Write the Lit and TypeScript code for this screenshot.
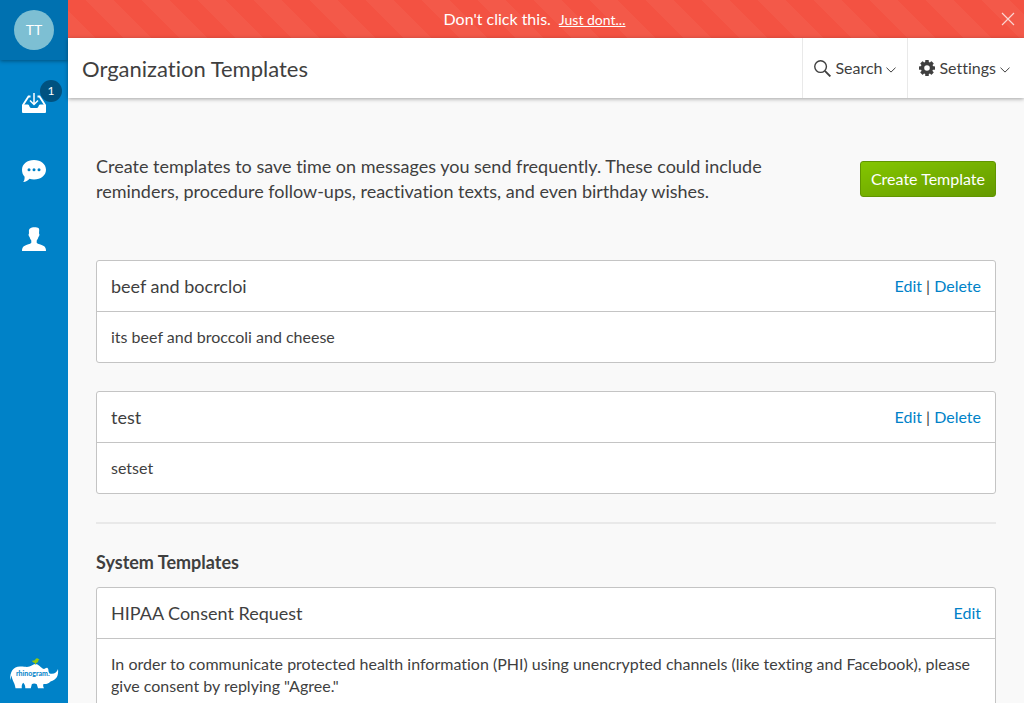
import { LitElement, html, css, svg, nothing } from "lit";
import { customElement, property } from "lit/decorators.js";

interface Template {
  title: string;
  body: string;
  removable: boolean;
}

const organizationTemplates: Template[] = [
  { title: "beef and bocrcloi", body: "its beef and broccoli and cheese", removable: true },
  { title: "test", body: "setset", removable: true },
];

const systemTemplates: Template[] = [
  {
    title: "HIPAA Consent Request",
    body: 'In order to communicate protected health information (PHI) using unencrypted channels (like texting and Facebook), please give consent by replying "Agree."',
    removable: false,
  },
];

const chevron = html`<svg class="chevron" width="10" height="6" viewBox="0 0 10 6" aria-hidden="true">
  <path d="M.5.7 5 5.1 9.5.7" fill="none" stroke="currentColor" stroke-width="1" />
</svg>`;

const gearTeeth = [0, 45, 90, 135, 180, 225, 270, 315].map(
  (a) => svg`<rect x="6.2" y="0" width="3.6" height="4" rx=".6" transform="rotate(${a} 8 8)" />`
);

@customElement("template-card")
export class TemplateCard extends LitElement {
  @property({ attribute: false }) template!: Template;

  static styles = css`
    :host { display: block; }
    .card { background: #fff; border: 1px solid #c4c4c4; border-radius: 3px; }
    .head {
      display: flex; align-items: center; justify-content: space-between; gap: 14px;
      padding: 14px; border-bottom: 1px solid #c4c4c4;
    }
    .title { margin: 0; font-size: 18px; line-height: 22px; font-weight: 400; }
    .actions { white-space: nowrap; }
    .link { color: #0082c8; text-decoration: none; }
    .body { margin: 0; padding: 14px; }
  `;

  render() {
    return html`<article class="card">
      <header class="head">
        <h3 class="title">${this.template.title}</h3>
        <span class="actions"><a class="link" href="#edit">Edit</a>${this.template.removable
          ? html` | <a class="link" href="#delete">Delete</a>`
          : nothing}</span>
      </header>
      <p class="body">${this.template.body}</p>
    </article>`;
  }
}

@customElement("app-root")
export class AppRoot extends LitElement {
  static styles = css`
    :host {
      display: flex; height: 100vh; overflow: hidden;
      font: 16px/22px Lato, sans-serif; font-variant-ligatures: none; color: #3f3f3f; background: #f9f9f9;
    }
    * { box-sizing: border-box; }
    button { font: inherit; font-variant-ligatures: none; color: inherit; border: 0; background: none; cursor: pointer; }
    svg { display: block; flex: none; }

    .side { flex: none; width: 68px; display: flex; flex-direction: column; background: #0082c8; }
    .profile {
      display: flex; justify-content: center; align-items: center; height: 60px;
      background: #0071b0; box-shadow: 0 1px 4px rgba(0, 0, 0, 0.4);
    }
    .avatar { width: 40px; height: 40px; padding: 0; border-radius: 50%; background: #7dbfd3; color: #fff; font-size: 14px; }
    .nav { display: flex; flex-direction: column; padding-top: 9px; }
    .nav-item { position: relative; display: flex; justify-content: center; align-items: center; height: 68px; color: #fff; }
    .badge {
      position: absolute; top: 11px; right: 6px; width: 22px; height: 22px; border-radius: 50%;
      background: #005280; font-size: 12px; text-align: center;
    }
    .logo { margin: auto auto 12px 9px; }
    .logo-text { font: 700 7px Lato, sans-serif; fill: #0082c8; }

    .page { flex: 1; min-width: 0; display: flex; flex-direction: column; }
    .alert {
      flex: none; display: flex; align-items: center; height: 38px; padding-right: 9px; color: #fff;
      background: #f35242 linear-gradient(45deg, rgba(255, 255, 255, 0.04) 25%, transparent 25%, transparent 50%,
        rgba(255, 255, 255, 0.04) 50%, rgba(255, 255, 255, 0.04) 75%, transparent 75%) 18px 0 / 56px 56px;
    }
    .message { flex: 1; display: flex; justify-content: center; align-items: baseline; gap: 8px; margin: 0; }
    .alert-link { color: inherit; font-size: 14px; }
    .close { padding: 0; opacity: 0.75; }

    .top {
      flex: none; position: relative; display: flex; height: 60px; background: #fff;
      box-shadow: 0 1px 4px rgba(0, 0, 0, 0.35);
    }
    .heading { flex: 1; margin: 0; padding: 0 14px; font-size: 22px; line-height: 62px; font-weight: 400; }
    .menu { display: flex; align-items: center; gap: 4px; padding: 0 11px; border-left: 1px solid #e9e9e9; }
    .menu:last-child { padding-right: 14px; }
    .chevron { margin-top: 4px; }

    .content { flex: 1; min-height: 0; overflow-y: auto; scrollbar-width: none; padding: 56px 28px; }
    .intro { display: flex; align-items: center; justify-content: space-between; gap: 56px; margin-bottom: 56px; }
    .lead { margin: 0; font-size: 18px; line-height: 25px; }
    .create {
      flex: none; height: 36px; padding: 0 10px; color: #fff; border: 1px solid #619500; border-radius: 3px;
      background: linear-gradient(to bottom right, #84c600, #659a00);
    }
    .list { display: grid; gap: 28px; }
    .rule { height: 2px; margin: 28px 0; border: 0; background: #e9e9e9; }
    .section { margin: 0 0 14px; font-size: 18px; line-height: 21px; font-weight: 700; }
  `;

  private cards(list: Template[]) {
    return html`<div class="list">
      ${list.map((t) => html`<template-card .template=${t}></template-card>`)}
    </div>`;
  }

  render() {
    return html`
      <aside class="side">
        <div class="profile"><button class="avatar">TT</button></div>
        <nav class="nav">
          <a class="nav-item" href="#inbox" aria-label="Inbox">
            <svg width="24" height="20" viewBox="0 0 24 20">
              <path d="M8.500 3.500H6.500L1 12M15.500 3.500h2L23 12" fill="none" stroke="currentColor" stroke-width="1.800" />
              <path d="M0 11.500h6c1.200 0 1.600 3.500 3 3.500h6c1.400 0 1.800-3.500 3-3.500H24v7.500q0 1-1 1H1q-1 0-1-1Z" fill="currentColor" />
              <path d="M12 0v11M8 7.500l4 4 4-4" fill="none" stroke="currentColor" stroke-width="1.500" />
            </svg>
            <span class="badge">1</span>
          </a>
          <a class="nav-item" href="#messages" aria-label="Messages">
            <svg width="24" height="22" viewBox="0 0 24 22">
              <path d="M12 0c6.800 0 12 4 12 9.700s-5.200 9.700-12 9.700c-1.700 0-3.100-.2-4.500-.7C6 20.500 3.800 22 1.200 22c1-1.100 1.500-2.700 1.400-5.200C.9 15 0 12.500 0 9.700 0 4 5.200 0 12 0Z" fill="currentColor" />
              <g fill="#0082c8"><circle cx="7" cy="9.700" r="1.500" /><circle cx="12" cy="9.700" r="1.500" /><circle cx="17" cy="9.700" r="1.500" /></g>
            </svg>
          </a>
          <a class="nav-item" href="#contacts" aria-label="Contacts">
            <svg width="24" height="24" viewBox="0 0 24 24">
              <path d="M8 1.500C9.500 0 14.500-.5 16.700 1.200c.9 1 .3 3.300.3 5.300.8.300.4 3-.6 3.500-.4 1.700-1 2.700-1.700 3.500v2.300c1 1.500 4.500 1.700 7 3.200 1.700 1 2.300 2.500 2.300 5H0c0-2.500.6-4 2.300-5 2.500-1.500 6-1.700 7-3.200v-2.300C8.600 12.700 8 11.700 7.600 10c-1-.5-1.400-3.200-.6-3.500C7 4.500 6.500 2.500 8 1.500Z" fill="currentColor" />
            </svg>
          </a>
        </nav>
        <svg class="logo" width="50" height="34" viewBox="0 0 50 34" role="img" aria-label="rhinogram">
          <path d="M1.200 23C.8 15 4 9.800 11 9.500c4-.2 6.500 1 9.500 0C23 8.500 24.500 7 26.500 7c3 .2 4.500 3 7.500 4.800 2 .8 3.200-1.800 4.500-.8 1.500 1.200.4 3.500 2 5.500 4.500 1 7.300-.7 8.500-4.500.8 6.500-1.500 11-7.500 12.500-2 2-4.200 2.800-7 2.500-.7 1.500-.2 2.800.5 4.300h-6l-1.200-4c-1.500-1-4-1-5 0l-1 4h-5.500c0-2.500-.5-4-2-5.500-1.500 1.200-1.700 3.200-1.500 5.500H6.500C6 26 3.200 24 2.500 18.500c-.7 1.500-.6 3-1.300 4.500Z" fill="#fff" />
          <path d="M22.800 3.500c1.700.4 2.500.2 3.500-1C27.200 1 28.500.8 29.500 2l1 .5-1 .7c-.3 2-1.500 3-3.300 3-1.600-.3-2.800-1.300-3.400-2.700ZM26 5.500h1V7.500h-1Z" fill="#93c90e" />
          <text class="logo-text" x="7" y="19">rhinogram.</text>
        </svg>
      </aside>
      <div class="page">
        <div class="alert" role="alert">
          <p class="message">Don't click this. <a class="alert-link" href="#dont">Just dont...</a></p>
          <button class="close" aria-label="Close">
            <svg width="14" height="14" viewBox="0 0 14 14"><path d="m1 1 12 12M13 1 1 13" stroke="currentColor" stroke-width="1.200" /></svg>
          </button>
        </div>
        <header class="top">
          <h1 class="heading">Organization Templates</h1>
          <button class="menu">
            <svg width="17" height="17" viewBox="0 0 16 16"><circle cx="6.200" cy="6.200" r="5.500" fill="none" stroke="currentColor" stroke-width="1.300" /><path d="m10.200 10.200 5.200 5.300" stroke="currentColor" stroke-width="1.700" /></svg>
            Search ${chevron}
          </button>
          <button class="menu">
            <svg width="16" height="16" viewBox="0 0 16 16" fill="currentColor">${gearTeeth}<circle cx="8" cy="8" r="4.500" fill="none" stroke="currentColor" stroke-width="3.400" /></svg>
            Settings ${chevron}
          </button>
        </header>
        <main class="content">
          <div class="intro">
            <p class="lead">Create templates to save time on messages you send frequently. These could include reminders, procedure follow-ups, reactivation texts, and even birthday wishes.</p>
            <button class="create">Create Template</button>
          </div>
          ${this.cards(organizationTemplates)}
          <hr class="rule" />
          <h2 class="section">System Templates</h2>
          ${this.cards(systemTemplates)}
        </main>
      </div>
    `;
  }
}
